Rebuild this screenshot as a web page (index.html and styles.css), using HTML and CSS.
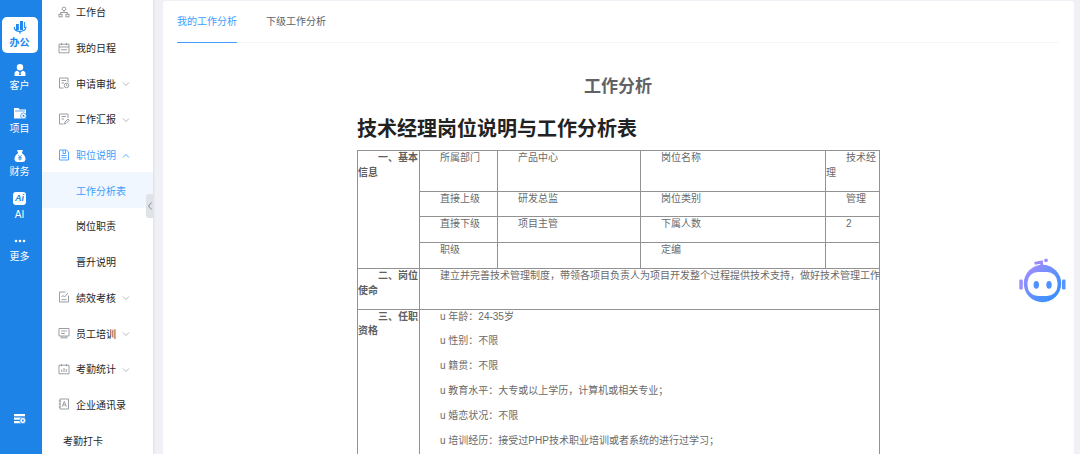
FILE: index.html
```html
<!DOCTYPE html>
<html lang="zh-CN">
  <head>
    <meta charset="utf-8">
    <title>工作分析表</title>
    <link rel="stylesheet" href="styles.css">
  </head>

  <body>
    <div class="app">
      <nav class="rail">
        <a class="rail-item active">
          <svg width="14" height="14" viewBox="0 0 14 14" fill="currentColor"><rect x="3" y="4" width="2.800" height="6"/><rect x="7" y="1" width="3" height="9"/><path d="M11.600 2v6" stroke="currentColor" stroke-width="1"/><path d="M1.200 7C1.200 10 3.500 11.400 7 11.400S12.800 9.800 13 6.500" fill="none" stroke="currentColor" stroke-width="1.200"/><path d="M6.300 11h1.400v2.500H6.300z"/></svg>
          <span>办公</span>
        </a>
        <a class="rail-item">
          <svg width="14" height="14" viewBox="0 0 14 14" fill="currentColor"><circle cx="7" cy="4.200" r="3.200"/><path d="M1.500 13V10.800Q1.500 8.200 4.500 7.800L6.500 9.500 6 12h2l-.5-2.500 2-1.700q3 .4 3 3V13z"/></svg>
          <span>客户</span>
        </a>
        <a class="rail-item">
          <svg width="14" height="14" viewBox="0 0 14 14"><path d="M1 2h4.500l1 1.500H13V12.500H1z" fill="#fff"/><path d="M2 5h10" stroke="#1e83e6" stroke-width=".7"/><circle cx="10.500" cy="9.800" r="2.900" fill="#fff" stroke="#1e83e6" stroke-width=".7"/><circle cx="10.500" cy="9.800" r="1" fill="#1e83e6"/></svg>
          <span>项目</span>
        </a>
        <a class="rail-item">
          <svg width="14" height="14" viewBox="0 0 14 14"><path d="M4 1h6L8.800 4Q13 7.200 12.500 10.500 12 13 9.500 13h-5Q2 13 1.500 10.500 1 7.200 5.200 4z" fill="#fff"/><path d="M5.300 6 7 8l1.700-2M7 8v3.500M5.200 8.500h3.600M5.200 10h3.600" fill="none" stroke="#1e83e6" stroke-width=".7"/></svg>
          <span>财务</span>
        </a>
        <a class="rail-item">
          <span class="ai-mark">Ai</span>
          <span>AI</span>
        </a>
        <a class="rail-item">
          <svg width="14" height="14" viewBox="0 0 14 14" fill="currentColor"><circle cx="3" cy="7" r="1.300"/><circle cx="7" cy="7" r="1.300"/><circle cx="11" cy="7" r="1.300"/></svg>
          <span>更多</span>
        </a>
        <a class="rail-bottom">
          <svg width="14" height="12" viewBox="0 0 14 12"><path d="M1 1h11v2.300H1zM1 4.500h11v2.300H1zM1 8h11v2.300H1z" fill="#fff"/><circle cx="9.800" cy="7.500" r="3" fill="#fff" stroke="#1e83e6" stroke-width=".8"/><circle cx="9.800" cy="7.500" r="1" fill="#1e83e6"/></svg>
        </a>
      </nav>

      <aside class="menu">
        <a class="menu-item">
          <svg class="icon" viewBox="0 0 12 12"><circle cx="6" cy="2.800" r="1.800"/><path d="M6 4.600V6.500M2.600 8.300V6.500h6.800v1.800"/><rect x="1" y="8.300" width="3" height="2.500"/><rect x="8" y="8.300" width="3" height="2.500"/></svg>
          <span>工作台</span>
        </a>
        <a class="menu-item">
          <svg class="icon" viewBox="0 0 12 12"><path d="M1 2.200h10v8.600H1zM3.500 1v2.200M8.500 1v2.200M1 5h10M3 7.800h6"/></svg>
          <span>我的日程</span>
        </a>
        <a class="menu-item">
          <svg class="icon" viewBox="0 0 12 12"><path d="M5.500 11H1.500V1h8.500v4.500M3.500 3.500h4.500M3.500 6h2.500"/><circle cx="8.500" cy="8.500" r="2.300"/><path d="M8.500 7.300v1.400h1"/></svg>
          <span>申请审批</span>
          <svg class="arrow" viewBox="0 0 8 6"><path d="M1 1.500 4 4.500 7 1.500"/></svg>
        </a>
        <a class="menu-item">
          <svg class="icon" viewBox="0 0 12 12"><path d="M5.500 11H1.500V1H10v4M3.500 3.500h4.500M3.500 6h2.500M6.500 11l.4-1.700L10 6l1.200 1.200L8 10.500z"/></svg>
          <span>工作汇报</span>
          <svg class="arrow" viewBox="0 0 8 6"><path d="M1 1.500 4 4.500 7 1.500"/></svg>
        </a>
        <a class="menu-item open">
          <svg class="icon" viewBox="0 0 12 12"><path d="M1.500 1h7L10.500 3v8h-9zM3.500 8.700h5M3.500 6.500h5M5 1v3.500h2.500V1"/></svg>
          <span>职位说明</span>
          <svg class="arrow" viewBox="0 0 8 6"><path d="M1 4.500 4 1.500 7 4.500"/></svg>
        </a>
        <a class="menu-item sub current"><span>工作分析表</span></a>
        <a class="menu-item sub"><span>岗位职责</span></a>
        <a class="menu-item sub"><span>晋升说明</span></a>
        <a class="menu-item">
          <svg class="icon" viewBox="0 0 12 12"><path d="M7.500 1h-6v10h9V4.500M3.500 6l1.500-1.500L6.500 6 10 2M3.500 8.700h5"/></svg>
          <span>绩效考核</span>
          <svg class="arrow" viewBox="0 0 8 6"><path d="M1 1.500 4 4.500 7 1.500"/></svg>
        </a>
        <a class="menu-item">
          <svg class="icon" viewBox="0 0 12 12"><path d="M1 1.500h10V9H1zM3.200 4h5.600M3.200 6.500h3.600M4 9v1.800M8 9v1.800M2.500 10.800h7"/></svg>
          <span>员工培训</span>
          <svg class="arrow" viewBox="0 0 8 6"><path d="M1 1.500 4 4.500 7 1.500"/></svg>
        </a>
        <a class="menu-item">
          <svg class="icon" viewBox="0 0 12 12"><path d="M1 2.200h10v8.600H1zM3.500 1v2.200M8.500 1v2.200M3.800 9V6.500M6 9V5M8.200 9V6"/></svg>
          <span>考勤统计</span>
          <svg class="arrow" viewBox="0 0 8 6"><path d="M1 1.500 4 4.500 7 1.500"/></svg>
        </a>
        <a class="menu-item">
          <svg class="icon" viewBox="0 0 12 12"><path d="M2 1h8.500v10H2zM.8 3h2M.8 6h2M.8 9h2M4.300 8.500l2-5 2 5M5 7h2.600"/></svg>
          <span>企业通讯录</span>
        </a>
        <a class="menu-item plain"><span>考勤打卡</span></a>
        <div class="collapse">
          <svg viewBox="0 0 6 10"><path d="M4.500 1.500 1.500 5l3 3.500"/></svg>
        </div>
      </aside>

      <main class="panel">
        <div class="tabs">
          <a class="tab active">我的工作分析</a>
          <a class="tab">下级工作分析</a>
        </div>

        <h1 class="page-title">工作分析</h1>

        <div class="doc">
          <h2 class="doc-title">技术经理岗位说明与工作分析表</h2>
          <table class="sheet">
            <colgroup>
              <col class="c1"><col class="c2"><col class="c3"><col class="c4"><col class="c5">
            </colgroup>
            <tr>
              <th rowspan="4"><p>一、基本信息</p></th>
              <td><p>所属部门</p></td>
              <td><p>产品中心</p></td>
              <td><p>岗位名称</p></td>
              <td><p>技术经理</p></td>
            </tr>
            <tr>
              <td><p>直接上级</p></td>
              <td><p>研发总监</p></td>
              <td><p>岗位类别</p></td>
              <td><p>管理</p></td>
            </tr>
            <tr>
              <td><p>直接下级</p></td>
              <td><p>项目主管</p></td>
              <td><p>下属人数</p></td>
              <td><p>2</p></td>
            </tr>
            <tr>
              <td><p>职级</p></td>
              <td></td>
              <td><p>定编</p></td>
              <td></td>
            </tr>
            <tr>
              <th><p>二、岗位使命</p></th>
              <td colspan="4"><p class="line">建立并完善技术管理制度，带领各项目负责人为项目开发整个过程提供技术支持，做好技术管理工作</p></td>
            </tr>
            <tr>
              <th><p>三、任职资格</p></th>
              <td colspan="4">
                <p>u 年龄：24-35岁</p>
                <p>u 性别：不限</p>
                <p>u 籍贯：不限</p>
                <p>u 教育水平：大专或以上学历，计算机或相关专业；</p>
                <p>u 婚恋状况：不限</p>
                <p>u 培训经历：接受过PHP技术职业培训或者系统的进行过学习；</p>
              </td>
            </tr>
          </table>
        </div>
      </main>

      <div class="robot">
        <svg width="48" height="46" viewBox="0 0 48 46">
          <defs>
            <linearGradient id="face" x1="0" y1="0" x2="1" y2="1">
              <stop offset="0" stop-color="#ad8cff"/>
              <stop offset=".65" stop-color="#4f91ff"/>
              <stop offset="1" stop-color="#2f8dff"/>
            </linearGradient>
          </defs>
          <rect x="1.300" y="21.500" width="3.500" height="10" rx="1.200" fill="#9a91fb"/>
          <rect x="44" y="21.500" width="3.500" height="10" rx="1.200" fill="#5794ff"/>
          <path d="M16.500 5.300 23.500 4l.5 5" fill="none" stroke="#9a8cf8" stroke-width="2.800"/>
          <circle cx="28" cy="2.300" r="1.900" fill="#9a91fb"/>
          <circle cx="24.500" cy="25.500" r="18.700" fill="url(#face)"/>
          <rect x="9.500" y="14" width="30" height="24" rx="10.500" fill="#fff"/>
          <ellipse cx="18.300" cy="26.800" rx="2.700" ry="3.900" fill="#4f91ff"/>
          <ellipse cx="31" cy="26.800" rx="2.700" ry="3.900" fill="#4f91ff"/>
        </svg>
      </div>
    </div>
  </body>
</html>
```

FILE: styles.css
```css
body {
margin: 0;
background: #f0f1f7;
font-family: "Liberation Sans", "Noto Sans CJK SC", sans-serif;
font-size: 10px;
color: #606266;
overflow: hidden;
}

.app {
display: flex;
height: 454px;
overflow: hidden;
}

/* Blue rail on the left */
.rail {
display: flex;
flex-direction: column;
flex: none;
align-items: center;
box-sizing: border-box;
width: 42px;
padding: 17px 3px 29px 0;
background: #1e83e6;
color: #fff;
}

.rail-item {
display: flex;
flex-direction: column;
align-items: center;
box-sizing: border-box;
width: 36px;
height: 36px;
margin-bottom: 6.9px;
padding-top: 3px;
border-radius: 5px;
line-height: 16px;
}

.rail-item svg {
display: block;
margin: 0 0 1px;
}

.rail-item.active {
background: #fff;
color: #1e88f0;
font-weight: bold;
}

.ai-mark {
width: 13px;
height: 13px;
margin-bottom: 2px;
border-radius: 3px;
background: #fff;
color: #1e83e6;
font-size: 9px;
font-style: italic;
font-weight: bold;
line-height: 13px;
text-align: center;
}

.rail-bottom {
margin-top: auto;
line-height: 0;
}

/* Menu */
.menu {
position: relative;
flex: none;
width: 111px;
margin-top: -6px;
background: #fff;
color: #1f1f1f;
box-shadow: 1px 0 2px rgba(0, 0, 0, .08);
}

.menu-item {
display: flex;
align-items: center;
box-sizing: border-box;
height: 35.7px;
padding-left: 16px;
}

.menu-item.sub,
.menu-item.current {
padding-left: 34px;
}

.menu-item.plain {
padding-left: 21px;
}

.menu-item.open,
.menu-item.current {
color: #409eff;
}

.menu-item.current {
background: #f0f7ff;
}

.icon {
width: 12px;
height: 12px;
margin-right: 6px;
fill: none;
stroke: #909399;
stroke-width: .9;
}

.arrow {
width: 8px;
height: 6px;
margin: 2px 0 0 6px;
fill: none;
stroke: #a8abb2;
stroke-width: .9;
}

.open .icon,
.open .arrow {
stroke: #409eff;
}

.collapse {
position: absolute;
top: 200px;
right: 0;
display: flex;
align-items: center;
justify-content: center;
width: 7px;
height: 24px;
border-radius: 3px 0 0 3px;
background: #dfe2e6;
}

.collapse svg {
width: 6px;
height: 10px;
fill: none;
stroke: #7d8085;
stroke-width: .9;
}

/* Content */
.panel {
flex: 1;
min-width: 0;
margin: 1px 6px 0 10px;
padding: 0 15px 0 14px;
background: #fff;
border-radius: 3px 3px 0 0;
}

.tabs {
display: flex;
gap: 29px;
height: 41px;
border-bottom: 1px solid #f5f6f8;
line-height: 41px;
}

.tab.active {
height: 41px;
border-bottom: 1px solid #409eff;
color: #409eff;
}

.page-title {
margin: 31px 0 0;
font-size: 17px;
line-height: 26px;
text-align: center;
}

.doc {
width: 522px;
margin: 15px auto 0 180px;
}

.doc-title {
margin: 0 0 6px;
color: #222;
font-size: 20px;
line-height: 29px;
}

.sheet {
width: 523px;
border-collapse: collapse;
table-layout: fixed;
color: #6a6a6a;
line-height: 14.8px;
}

.c1 {
width: 62px;
}
.c2 {
width: 78px;
}
.c3 {
width: 143px;
}
.c4 {
width: 185px;
}
.c5 {
width: 54px;
}

.sheet th,
.sheet td {
padding: 0;
border: 1px solid #929292;
text-align: left;
vertical-align: top;
}

.sheet th {
color: #606060;
}

.sheet p {
margin: 0 0 10px;
text-indent: 20px;
}

.sheet .line {
white-space: nowrap;
}

/* Assistant button */
.robot {
position: absolute;
top: 258px;
left: 1018px;
line-height: 0;
}
```
